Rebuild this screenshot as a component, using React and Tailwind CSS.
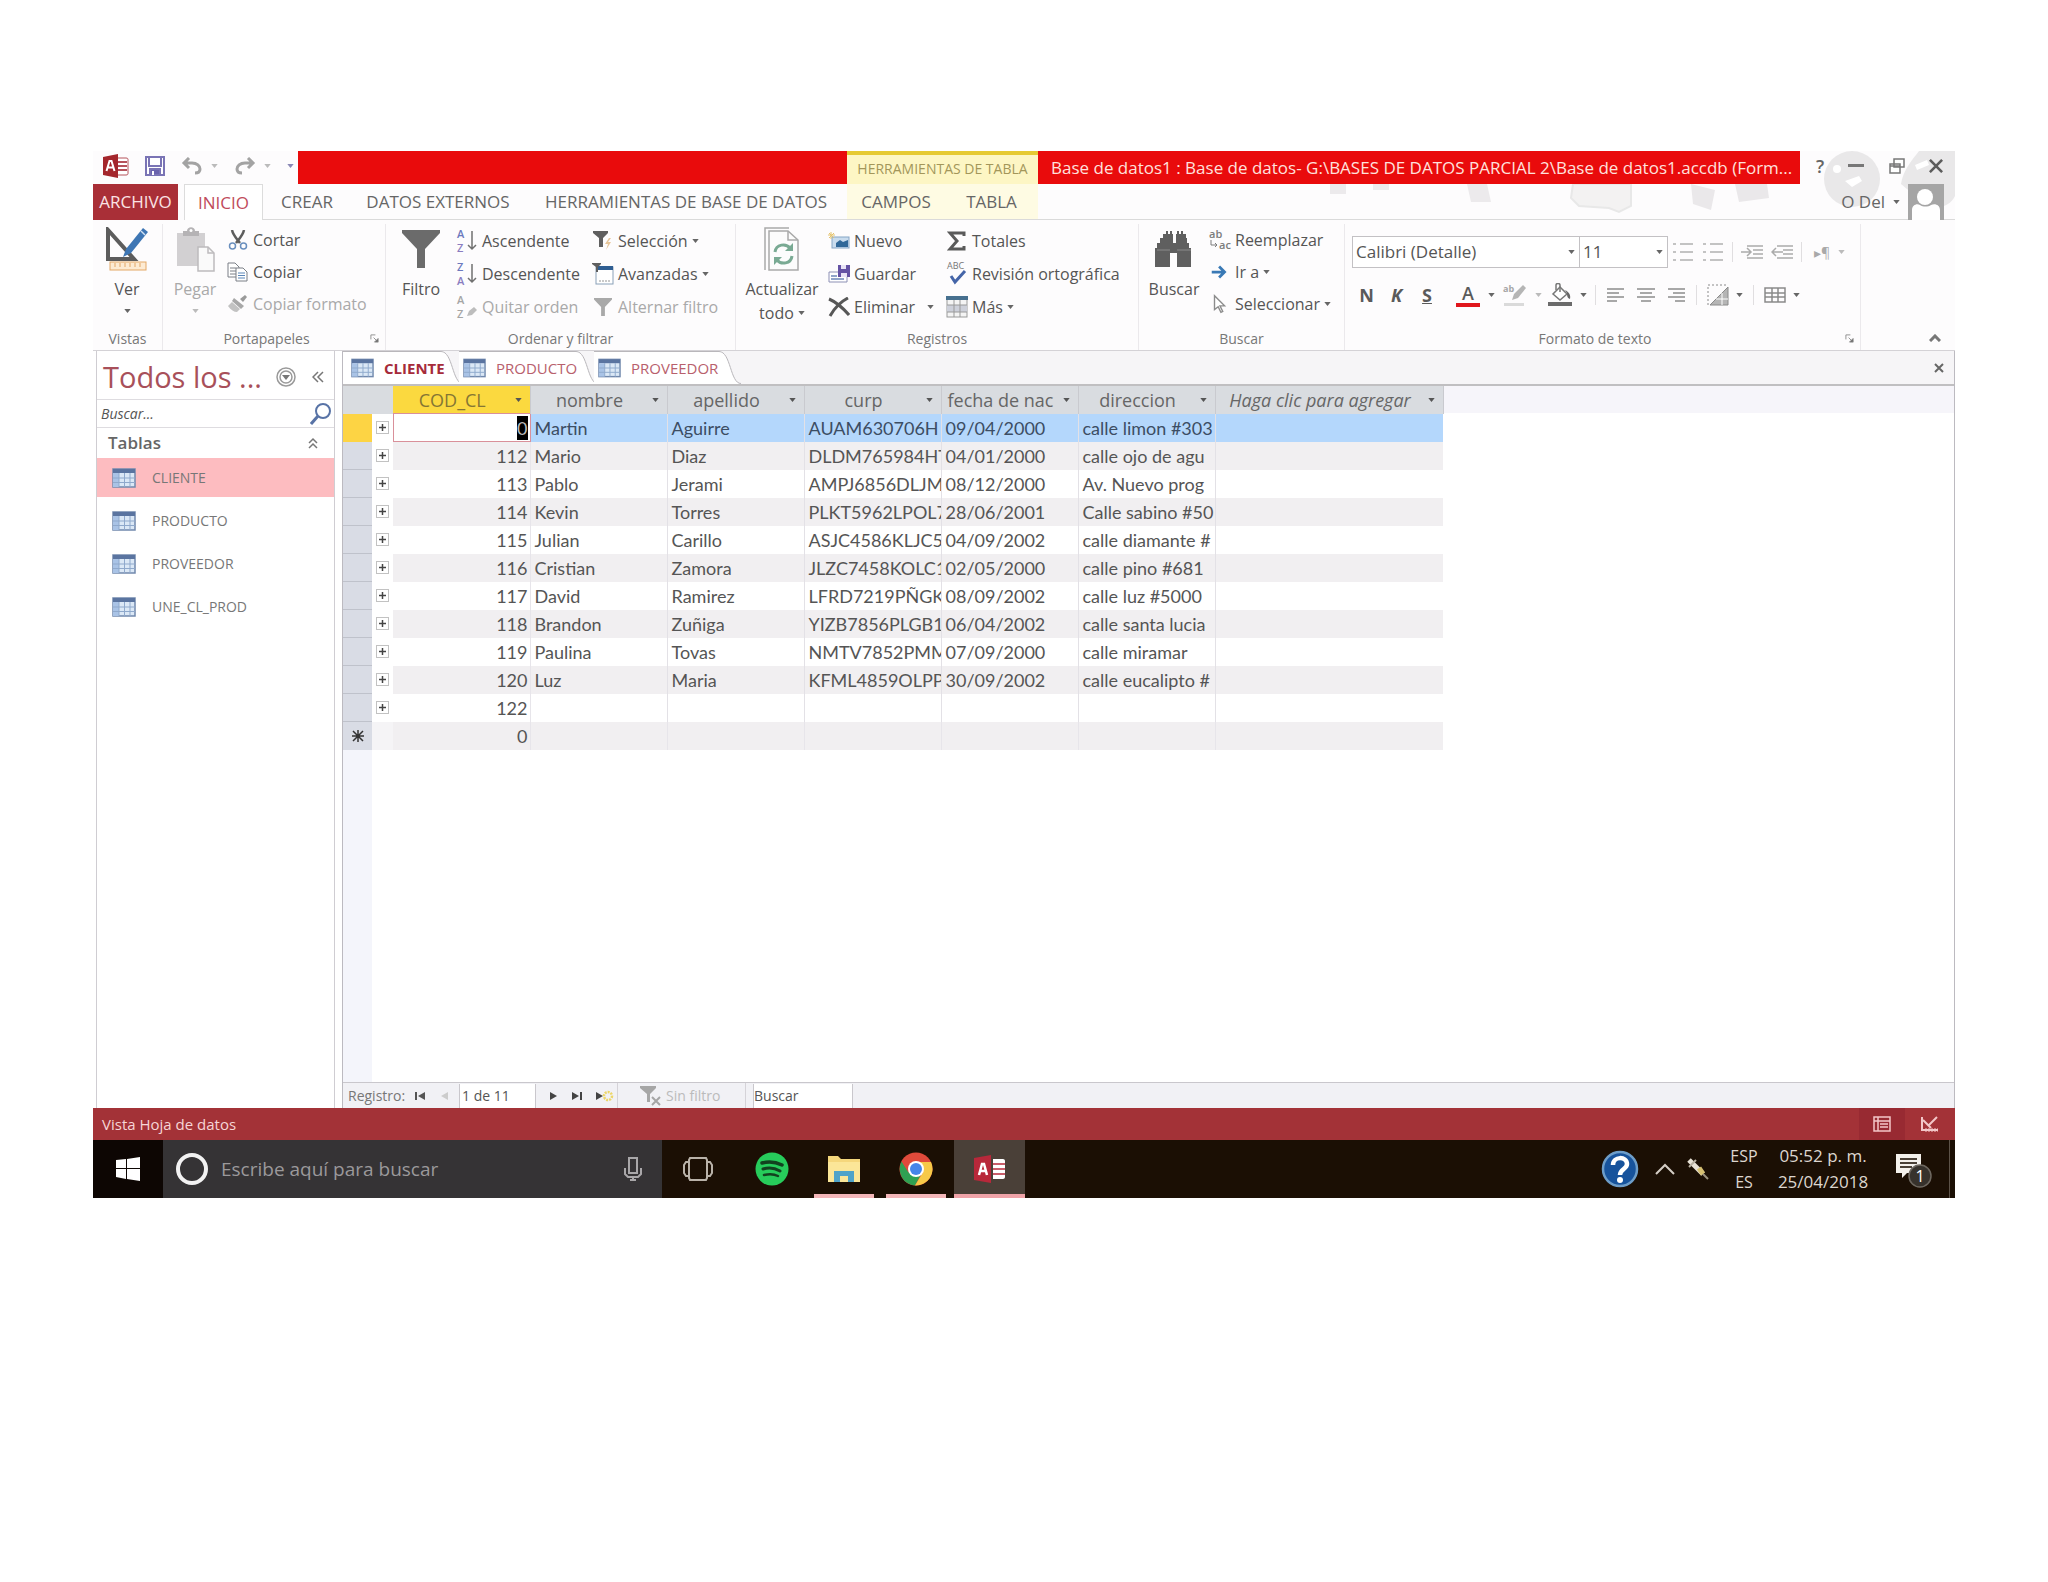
import { useState } from 'react';

const RIBBON_TABS = ['CREAR', 'DATOS EXTERNOS', 'HERRAMIENTAS DE BASE DE DATOS'];

const TABLES = ['CLIENTE', 'PRODUCTO', 'PROVEEDOR', 'UNE_CL_PROD'];

const COLUMNS = ['nombre', 'apellido', 'curp', 'fecha de nac', 'direccion'];

const ROWS = [
  { cod: '0', cells: ['Martin', 'Aguirre', 'AUAM630706H', '09/04/2000', 'calle limon #303'] },
  { cod: '112', cells: ['Mario', 'Diaz', 'DLDM765984HT', '04/01/2000', 'calle ojo de agu'] },
  { cod: '113', cells: ['Pablo', 'Jerami', 'AMPJ6856DLJM', '08/12/2000', 'Av. Nuevo prog'] },
  { cod: '114', cells: ['Kevin', 'Torres', 'PLKT5962LPOL7', '28/06/2001', 'Calle sabino #50'] },
  { cod: '115', cells: ['Julian', 'Carillo', 'ASJC4586KLJC5', '04/09/2002', 'calle diamante #'] },
  { cod: '116', cells: ['Cristian', 'Zamora', 'JLZC7458KOLC1', '02/05/2000', 'calle pino #681'] },
  { cod: '117', cells: ['David', 'Ramirez', 'LFRD7219PÑGK', '08/09/2002', 'calle luz #5000'] },
  { cod: '118', cells: ['Brandon', 'Zuñiga', 'YIZB7856PLGB1', '06/04/2002', 'calle santa lucia'] },
  { cod: '119', cells: ['Paulina', 'Tovas', 'NMTV7852PMM', '07/09/2000', 'calle miramar'] },
  { cod: '120', cells: ['Luz', 'Maria', 'KFML4859OLPP', '30/09/2002', 'calle eucalipto #'] },
  { cod: '122', cells: ['', '', '', '', ''] },
];

/* ---------- icons ---------- */

const Caret = ({ className = 'text-[#666]' }) => (
  <svg viewBox="0 0 8 5" className={`w-[7px] h-[4px] shrink-0 ${className}`} fill="currentColor">
    <path d="M0 0h8L4 5z" />
  </svg>
);

const AccessIcon = ({ className }) => (
  <svg viewBox="0 0 26 24" className={className}>
    <path d="M14 4h9c2 0 2 1 2 2v13c0 1 0 2-2 2h-9z" fill="#fff" stroke="#b5525b" />
    <path d="M15 8h9M15 12h9M15 16h9" stroke="#b5525b" strokeWidth="2" />
    <path d="M0 3 15 0v24L0 21z" fill="#a4262c" />
    <path d="m3.500 17 3-10h2l3 10M5 13.500h5" stroke="#fff" strokeWidth="2" fill="none" />
  </svg>
);

const AccessTaskIcon = () => (
  <svg viewBox="0 0 32 28" className="w-8 h-7">
    <path d="M0 3 17 0v28L0 25z" fill="#b8283a" />
    <path d="m5 20 3-11h2l3 11M6 16h6" stroke="#fff" strokeWidth="2.500" fill="none" />
    <path d="M19 4h9c3 0 3 1 3 3v14c0 2 0 3-3 3h-9z" fill="#fff" />
    <path d="M19 9h12M19 14h12M19 19h12" stroke="#b8283a" strokeWidth="1.500" />
  </svg>
);

const TableIcon = ({ className = 'w-6 h-5' }) => (
  <svg viewBox="0 0 24 20" className={className}>
    <rect x="1" y="1" width="22" height="18" fill="#dbe8f6" stroke="#7189ad" strokeWidth="1.500" />
    <rect x="1" y="1" width="22" height="4" fill="#5a74a0" />
    <path d="M1 5h6v14H1z" fill="#a9c3e6" />
    <path d="M7 5v14M12.500 5v14M18 5v14M1 10h22M1 14.500h22" stroke="#8fa9cc" />
  </svg>
);

const SaveIcon = () => (
  <svg viewBox="0 0 20 20" className="w-5 h-5" fill="none" stroke="#7a74b5" strokeWidth="2">
    <path d="M1 1h18v18H1z" fill="#fff" />
    <path d="M4 1v9h12V1" />
    <path d="M5 19v-6h10v6z" fill="#6a63ad" />
    <path d="M8 15v4" stroke="#fff" />
  </svg>
);

const UndoIcon = ({ className = '' }) => (
  <svg viewBox="0 0 22 18" className={`w-[22px] h-[18px] ${className}`} fill="none" stroke="#a3a3a3" strokeWidth="3">
    <path d="M8 1 3 6l5 5M3 6h8c5 0 8 3 8 6s-2 4-5 4" />
  </svg>
);

const ViewIcon = () => (
  <svg viewBox="0 0 42 44" className="w-[42px] h-[44px]">
    <path d="M2 3v29h26z" fill="none" stroke="#5c5c5c" strokeWidth="4" />
    <path d="m17 30 3-8L37 1l5 4-17 21z" fill="#3e76b4" />
    <path d="m35 4 4 4" stroke="#cfe0f2" strokeWidth="1.500" />
    <rect x="4" y="35" width="36" height="8" fill="#fdebd3" stroke="#e3a766" />
    <path d="M9 36v4M14 36v4M19 36v4M24 36v4M29 36v4M34 36v4" stroke="#e3a766" />
  </svg>
);

const PasteIcon = () => (
  <svg viewBox="0 0 40 46" className="w-10 h-[46px]">
    <path d="M2 7h28v33H2z" fill="#d2d0d2" />
    <path d="M8 10V5h4c0-5 8-5 8 0h4v5z" fill="#b5b3b5" />
    <circle cx="16" cy="4.500" r="1.500" fill="#fff" />
    <path d="M23 21h10l6 6v18H23z" fill="#fafafa" stroke="#bdbbbd" strokeWidth="1.500" />
    <path d="M33 21v6h6" fill="none" stroke="#bdbbbd" strokeWidth="1.500" />
  </svg>
);

const ScissorsIcon = () => (
  <svg viewBox="0 0 20 20" className="w-5 h-5" fill="none">
    <path d="M4 0c1 5 4 8 8 13M16 0c-1 5-4 8-8 13" stroke="#5d5d5d" strokeWidth="2.500" />
    <circle cx="4.500" cy="16" r="3" stroke="#6a8fbe" strokeWidth="1.500" />
    <circle cx="15.500" cy="16" r="3" stroke="#6a8fbe" strokeWidth="1.500" />
  </svg>
);

const CopyIcon = () => (
  <svg viewBox="0 0 22 20" className="w-[22px] h-5" stroke="#7a7f86" fill="#fff">
    <path d="M1 1h7l4 4v10H1z" />
    <path d="M3 6h6M3 9h6M3 12h6" />
    <path d="M9 6h7l4 4v9H9z" />
    <path d="M11 11h7M11 13.500h7M11 16h7" stroke="#5b86b8" />
  </svg>
);

const BrushIcon = () => (
  <svg viewBox="0 0 20 18" className="w-5 h-[18px]">
    <path d="m12 4 5-4 2 2-4 5z" fill="#9a9a9a" />
    <path d="m6 3 10 8-3 3L4 6z" fill="#a8a8a8" />
    <path d="m4 7 8 7-3 3c-3 0-6-2-9-6z" fill="#c2c2c2" />
  </svg>
);

const FunnelIcon = ({ className, fill = '#6b6b6b' }) => (
  <svg viewBox="0 0 38 38" className={className}>
    <path d="M0 0h38v3L23 19v19h-8V19L0 3z" fill={fill} />
  </svg>
);

const SortIcon = ({ top, bottom, muted }) => (
  <svg viewBox="0 0 22 24" className="w-[22px] h-6 overflow-visible" fontFamily="Open Sans, sans-serif" fontSize="11" fontWeight="600">
    <text x="1" y="9" fill={muted ? '#a5a5a5' : '#6b78bd'}>{top}</text>
    <text x="1" y="23" fill={muted ? '#a5a5a5' : '#8a7cc0'}>{bottom}</text>
    {muted ? (
      <path d="m11 21 2-5 5-4 3 3-5 5z" fill="#bdbdbd" />
    ) : (
      <path d="M16 2v18m-4-4 4 4 4-4" fill="none" stroke="#707070" strokeWidth="1.500" />
    )}
  </svg>
);

const SelectionIcon = () => (
  <svg viewBox="0 0 22 20" className="w-[22px] h-5">
    <path d="M1 0h15v2l-5 5v9H7V7L1 2z" fill="#5f5f5f" />
    <path d="m17 7-4 6h3l-2 6 5-8h-3l3-4z" fill="#e6c59a" />
  </svg>
);

const AdvancedIcon = () => (
  <svg viewBox="0 0 22 22" className="w-[22px] h-[22px]">
    <rect x="4" y="4" width="17" height="17" fill="#fff" stroke="#8aa0b8" />
    <path d="M4 3h17v4H4z" fill="#2f5e92" />
    <path d="M7 18h12" stroke="#c9c9c9" strokeWidth="2" strokeDasharray="2 1" />
    <path d="M0 0h9v1L6 4v5H4V4L0 1z" fill="#5f5f5f" />
  </svg>
);

const RefreshIcon = () => (
  <svg viewBox="0 0 36 44" className="w-9 h-11" fill="none">
    <path d="M1 43V1h24" stroke="#a9a9a9" strokeWidth="1.500" />
    <path d="M5 4h19l10 9v30H5z" fill="#fcfcfc" stroke="#a9a9a9" strokeWidth="1.500" />
    <path d="M24 4v9h10" stroke="#a9a9a9" strokeWidth="1.500" />
    <path d="M11 25c1-8 11-9 15-4M28 29c-1 8-11 9-15 4" stroke="#79aa93" strokeWidth="3" />
    <path d="M29 16v8h-8zM10 38v-8h8z" fill="#79aa93" />
  </svg>
);

const NewRecordIcon = () => (
  <svg viewBox="0 0 22 18" className="w-[22px] h-[18px]">
    <rect x="4" y="5" width="17" height="11" fill="#c9dcee" stroke="#86a5c6" />
    <path d="M8 15v-4l4-3 3 2 5-2v7z" fill="#316899" />
    <path d="M3 0v7M0 3h7M1 1l5 5M6 1 1 6" stroke="#e5c46e" />
  </svg>
);

const SaveRecordIcon = () => (
  <svg viewBox="0 0 22 18" className="w-[22px] h-[18px]">
    <path d="M1 7h18v10H1z" fill="#fff" stroke="#8d90b5" />
    <path d="M3 11h6M3 14h13" stroke="#6c86b8" strokeWidth="1.500" />
    <path d="M10 0h12v12H10z" fill="#6452a4" />
    <path d="M13 0h5v4h-5zM13 8h6v4h-6z" fill="#e8e3f5" />
  </svg>
);

const DeleteIcon = () => (
  <svg viewBox="0 0 22 20" className="w-[22px] h-5" fill="none" stroke="#575757" strokeWidth="3">
    <path d="M1 2c7 3 14 9 20 16M20 1C12 5 6 12 2 19" />
  </svg>
);

const SigmaIcon = () => (
  <svg viewBox="0 0 20 20" className="w-5 h-5" fill="none" stroke="#5a5a5a" strokeWidth="3">
    <path d="M17 5V2H3l7 8-7 8h14v-3" />
  </svg>
);

const SpellIcon = () => (
  <svg viewBox="0 0 20 24" className="w-5 h-6 overflow-visible">
    <text x="0" y="7" fontFamily="Open Sans, sans-serif" fontSize="9" fill="#777">ABC</text>
    <path d="m4 14 4 6L18 9" fill="none" stroke="#4565a8" strokeWidth="3" />
  </svg>
);

const MoreIcon = () => (
  <svg viewBox="0 0 22 22" className="w-[22px] h-[22px]">
    <rect x="1" y="1" width="20" height="20" fill="#f4f4f4" stroke="#9a9a9a" />
    <path d="M0 0h22v4H0z" fill="#47708f" />
    <path d="M1 9h20v7H1z" fill="#cdd0da" />
    <path d="M1 9h20M1 16h20M8 4v17M14 4v17" stroke="#9a9a9a" />
  </svg>
);

const BinocularsIcon = () => (
  <svg viewBox="0 0 40 36" className="w-10 h-9" fill="#5f5f5f">
    <path d="M9 3h3V0h2v3h2V0h2v3h1v9h3V3h1V0h2v3h2V0h2v3h3v4h1v5h2v5h2v19H23V22h-7v14H1V17h2v-5h3V7h3z" />
    <path d="M3 19h13M23 19h14" stroke="#8b8b8b" />
  </svg>
);

const ReplaceIcon = () => (
  <svg viewBox="0 0 24 22" className="w-6 h-[22px] overflow-visible" fontFamily="Open Sans, sans-serif" fontSize="11" fontWeight="600" fill="#7c7c7c">
    <text x="1" y="9">ab</text>
    <text x="11" y="20">ac</text>
    <path d="M3 11v5h6m-2-2 2 2-2 2" fill="none" stroke="#7c7c7c" />
  </svg>
);

const GoToIcon = () => (
  <svg viewBox="0 0 24 16" className="w-6 h-4" fill="none" stroke="#3979b5" strokeWidth="3">
    <path d="M3 8h14M11 2l6 6-6 6" />
  </svg>
);

const CursorIcon = () => (
  <svg viewBox="0 0 24 20" className="w-6 h-5">
    <path d="M6 1v15l4-3 3 6 2-1-3-6h5z" fill="#fff" stroke="#8c8c8c" strokeWidth="1.500" />
  </svg>
);

const ListIcon = () => (
  <svg viewBox="0 0 22 20" className="w-[22px] h-5" stroke="#c3c3c3" strokeWidth="2">
    <path d="M1 2h3M8 2h13M1 10h3M8 10h13M1 18h3M8 18h13" />
  </svg>
);

const IndentIcon = ({ out }) => (
  <svg viewBox="0 0 22 14" className="w-[22px] h-[14px]" fill="none" stroke="#ababab" strokeWidth="1.500">
    <path d="M6 1h16M12 5h10M12 9h10M6 13h16" />
    {out ? <path d="M12 7H1m4-4L1 7l4 4" /> : <path d="M0 7h10M6 3l4 4-4 4" />}
  </svg>
);

const AlignIcon = ({ d }) => (
  <svg viewBox="0 0 20 16" className="w-5 h-4" stroke="#8c8c8c" strokeWidth="1.500">
    <path d={d} />
  </svg>
);

const HighlightIcon = () => (
  <svg viewBox="0 0 24 22" className="w-6 h-[22px] overflow-visible">
    <text x="0" y="8" fontFamily="Open Sans, sans-serif" fontSize="9" fill="#a6a6a6">ab</text>
    <path d="m9 16 2-6L20 1l3 3-8 10z" fill="#b5b5b5" />
    <path d="M1 19h20v3H1z" fill="#dadada" />
  </svg>
);

const BucketIcon = () => (
  <svg viewBox="0 0 24 24" className="w-6 h-6">
    <path d="m12 4 7 7-7 6-7-6z" fill="#fff" stroke="#777" strokeWidth="1.500" />
    <path d="M12 9V2c0-2-4-2-4 0v5" fill="none" stroke="#777" strokeWidth="1.500" />
    <path d="M17 7c4 2 6 5 5 9-3-1-3-4-3-6z" fill="#666" />
    <path d="M0 19h24v4H0z" fill="#6b6b6b" />
  </svg>
);

const AltRowsIcon = () => (
  <svg viewBox="0 0 22 22" className="w-[22px] h-[22px]" fill="none" stroke="#8a8a8a">
    <path d="M1 21V1h20" strokeDasharray="2 2" />
    <path d="M21 3v18H3z" fill="#b5b5b5" />
    <path d="M15 9v12M9 15h12" stroke="#fff" />
  </svg>
);

const GridlinesIcon = () => (
  <svg viewBox="0 0 22 16" className="w-[22px] h-4" fill="none" stroke="#8a8a8a" strokeWidth="1.500">
    <path d="M1 1h20v14H1zM1 6h20M1 10h20M8 1v14M14 1v14" />
  </svg>
);

const LauncherIcon = () => (
  <svg viewBox="0 0 10 10" className="w-[9px] h-[9px]" fill="none" stroke="#8a8a8a">
    <path d="M1 6V1h5M4 4l5 5" />
    <path d="M9 5v4H5z" fill="#666" />
  </svg>
);

/* faint drawing behind the tab row */
const Backdrop = () => (
  <svg viewBox="0 0 640 69" className="absolute right-0 top-0 w-[640px] h-[69px]" fill="#e9e8e9">
    <circle cx="537" cy="28" r="28" />
    <path d="M586 33c2-14 12-25 18-33h36v45c-6 12-20 14-30 8z" />
    <g fill="#fff">
      <circle cx="522" cy="18" r="4" />
      <path d="m530 30 14-5 3 5-10 6z" />
      <path d="m600 14 12-5 2 5-12 5z" />
    </g>
    <path d="M15 33h16v10H15zM58 33h16v6H58zM152 33h20l4 18h-20z" fill="#eceaec" />
    <path d="M258 33h58v22l-12 6-10-4-30-2-8-8z" fill="#f3f2f2" stroke="#e8e8e8" strokeWidth="2" />
    <path d="m376 33 24 6-4 20-18-6zM420 33h32l2 14-30 4z" fill="#eae8ea" />
  </svg>
);

/* ---------- ribbon parts ---------- */

function SmallButton({ icon, label, caret, muted }) {
  return (
    <button
      className={`flex items-center h-8 gap-1 whitespace-nowrap text-[16px] ${
        muted ? 'text-[#a9a9a9]' : 'text-[#555]'
      }`}
    >
      <span className="w-[22px] flex justify-center">{icon}</span>
      {label}
      {caret && <Caret />}
    </button>
  );
}

function BigButton({ icon, label, width, caret, muted }) {
  return (
    <button
      className={`flex flex-col items-center shrink-0 text-[16px] leading-6 ${width} ${
        muted ? 'text-[#a9a9a9]' : 'text-[#555]'
      }`}
    >
      <span className="h-[50px] flex items-center justify-center">{icon}</span>
      <span className="mt-[3px]">{label}</span>
      {caret && <Caret className={muted ? 'text-[#bbb] mt-2' : 'text-[#666] mt-2'} />}
    </button>
  );
}

function Group({ label, width, launcher, children }) {
  return (
    <section className={`flex flex-col shrink-0 border-r border-[#ebe9ec] ${width}`}>
      <div className="flex h-[102px] pl-1">{children}</div>
      <footer className="flex items-center h-6 text-[14px] text-[#777]">
        <span className="flex-1 text-center">{label}</span>
        {launcher && (
          <button aria-label={`Opciones de ${label}`} className="mr-[6px]">
            <LauncherIcon />
          </button>
        )}
      </footer>
    </section>
  );
}

const Separator = () => <span className="w-px h-5 bg-[#e0dee0]" />;

function TitleBar() {
  return (
    <header className="relative flex h-[33px]">
      <div className="flex items-center w-[205px] shrink-0 pl-[10px] pb-1">
        <AccessIcon className="w-[26px] h-6" />
        <button aria-label="Guardar" className="ml-4"><SaveIcon /></button>
        <button aria-label="Deshacer" className="flex items-center gap-2 ml-4">
          <UndoIcon /><Caret className="text-[#bbb]" />
        </button>
        <button aria-label="Rehacer" className="flex items-center gap-2 ml-4">
          <UndoIcon className="-scale-x-100" /><Caret className="text-[#bbb]" />
        </button>
        <button aria-label="Personalizar barra" className="ml-4"><Caret className="text-[#8a88b5]" /></button>
      </div>
      <div className="w-[549px] bg-[#e90b0c]" />
      <div className="w-[191px] shrink-0 bg-[#fdf6c4] border-t-4 border-[#e6ca32] flex items-center justify-center pb-[2px] text-[14px] text-[#a3965a] whitespace-nowrap">
        HERRAMIENTAS DE TABLA
      </div>
      <h1 className="flex-1 min-w-0 bg-[#e90b0c] text-[#ffe1dd] text-[17px] leading-[33px] pl-[13px] truncate">
        Base de datos1 : Base de datos- G:\BASES DE DATOS PARCIAL 2\Base de datos1.accdb (Form...
      </h1>
      <div className="flex items-center justify-between w-[155px] shrink-0 pl-4 pr-3 pb-1 text-[#666]">
        <button aria-label="Ayuda" className="text-[18px] font-semibold leading-5">?</button>
        <button aria-label="Minimizar" className="w-4 h-[3px] bg-[#777]" />
        <button aria-label="Restaurar">
          <svg viewBox="0 0 16 16" className="w-4 h-4" fill="#fff" stroke="#777" strokeWidth="1.500">
            <path d="M5 1h10v8H5zM1 6h10v9H1z" /><path d="M1 8h10" />
          </svg>
        </button>
        <button aria-label="Cerrar">
          <svg viewBox="0 0 16 16" className="w-[14px] h-[14px]" stroke="#5c5c5c" strokeWidth="3">
            <path d="m1 1 14 14M15 1 1 15" />
          </svg>
        </button>
      </div>
    </header>
  );
}

function RibbonTabs() {
  return (
    <nav className="relative flex h-9 text-[17px] text-[#666] whitespace-nowrap">
      <button className="w-[85px] bg-[#a92f37] text-[#fbe3e4]">ARCHIVO</button>
      <button className="w-[79px] ml-[6px] text-[#c04a5b] bg-white border border-b-0 border-[#dcdcdc]">INICIO</button>
      <div className="flex-1 flex border-b border-[#dadada]">
        {RIBBON_TABS.map((tab, i) => (
          <button key={tab} className={['w-[88px]', 'w-[174px]', 'w-[322px]'][i]}>{tab}</button>
        ))}
        <div className="flex w-[191px] bg-[#fefbe3]">
          <button className="w-[98px]">CAMPOS</button>
          <button className="flex-1">TABLA</button>
        </div>
        <div className="ml-auto flex items-center">
          <button className="flex items-center gap-2 mr-2 text-[17px]">O Del <Caret /></button>
          <svg viewBox="0 0 36 36" className="w-9 h-9 mr-[11px]">
            <path d="M0 0h36v36H0z" fill="#a5a5a5" />
            <circle cx="17" cy="13" r="8" fill="#fff" />
            <path d="M4 36V26c0-5 5-7 8-5 3 2 8 2 11 0 4-2 9 0 9 5v10z" fill="#fff" />
          </svg>
        </div>
      </div>
    </nav>
  );
}

function FormatGroup() {
  return (
    <div className="flex flex-col pl-[3px] pt-3">
      <div className="flex items-center h-8">
        <label className="flex items-center w-[228px] h-8 pr-1 border border-[#c3c1c4] bg-white">
          <select aria-label="Fuente" className="flex-1 appearance-none text-[17px] text-[#555] pl-[3px]">
            <option>Calibri (Detalle)</option>
          </select>
          <Caret />
        </label>
        <label className="flex items-center w-[89px] h-8 pr-1 -ml-px border border-[#c3c1c4] bg-white">
          <select aria-label="Tamaño" className="flex-1 appearance-none text-[17px] text-[#555] pl-[3px]">
            <option>11</option>
          </select>
          <Caret />
        </label>
        <div className="flex items-center gap-2 ml-1">
          <button aria-label="Viñetas"><ListIcon /></button>
          <button aria-label="Numeración"><ListIcon /></button>
          <Separator />
          <button aria-label="Aumentar sangría"><IndentIcon /></button>
          <button aria-label="Disminuir sangría"><IndentIcon out /></button>
          <Separator />
          <button className="flex items-center gap-2 pl-1 text-[14px] text-[#a9a9a9]">▸¶ <Caret className="text-[#bbb]" /></button>
        </div>
      </div>
      <div className="flex items-center h-8 mt-[11px] text-[18px] font-bold text-[#5a5a5a]">
        <button className="w-[29px]">N</button>
        <button className="w-[31px] italic">K</button>
        <button className="w-[30px] underline">S</button>
        <button aria-label="Color de fuente" className="flex items-center gap-2 ml-[14px]">
          <span className="w-6 h-6 border-b-4 border-[#e0161c] leading-5 font-semibold">A</span><Caret />
        </button>
        <button aria-label="Resaltado" className="flex items-center gap-2 ml-2"><HighlightIcon /><Caret className="text-[#bbb]" /></button>
        <button aria-label="Color de fondo" className="flex items-center gap-2 ml-[6px]"><BucketIcon /><Caret /></button>
        <div className="flex items-center gap-[10px] ml-2">
          <Separator />
          <button aria-label="Alinear a la izquierda"><AlignIcon d="M1 2h17M1 6h12M1 10h17M1 14h10" /></button>
          <button aria-label="Centrar"><AlignIcon d="M1 2h18M4 6h12M1 10h18M5 14h10" /></button>
          <button aria-label="Alinear a la derecha"><AlignIcon d="M2 2h17M7 6h12M2 10h17M9 14h10" /></button>
          <Separator />
          <button aria-label="Color de fila alternativo" className="flex items-center gap-[7px]"><AltRowsIcon /><Caret /></button>
          <Separator />
          <button aria-label="Líneas de cuadrícula" className="flex items-center gap-[7px]"><GridlinesIcon /><Caret /></button>
        </div>
      </div>
    </div>
  );
}

function Ribbon() {
  return (
    <div className="flex h-[131px] pt-1 border-b border-[#d4d2d6]">
      <Group label="Vistas" width="w-[70px]">
        <BigButton icon={<ViewIcon />} label="Ver" width="w-[60px]" caret />
      </Group>
      <Group label="Portapapeles" width="w-[223px]" launcher>
        <BigButton icon={<PasteIcon />} label="Pegar" width="w-[56px]" caret muted />
        <div className="ml-1">
          <SmallButton icon={<ScissorsIcon />} label="Cortar" />
          <SmallButton icon={<CopyIcon />} label="Copiar" />
          <SmallButton icon={<BrushIcon />} label="Copiar formato" muted />
        </div>
      </Group>
      <Group label="Ordenar y filtrar" width="w-[350px]">
        <BigButton icon={<FunnelIcon className="w-[38px] h-[38px]" />} label="Filtro" width="w-[62px]" />
        <div className="flex flex-col gap-px pt-px w-[136px] ml-1">
          <SmallButton icon={<SortIcon top="A" bottom="Z" />} label="Ascendente" />
          <SmallButton icon={<SortIcon top="Z" bottom="A" />} label="Descendente" />
          <SmallButton icon={<SortIcon top="A" bottom="Z" muted />} label="Quitar orden" muted />
        </div>
        <div className="flex flex-col gap-px pt-px">
          <SmallButton icon={<SelectionIcon />} label="Selección" caret />
          <SmallButton icon={<AdvancedIcon />} label="Avanzadas" caret />
          <SmallButton icon={<FunnelIcon className="w-5 h-[18px]" fill="#a9a9a9" />} label="Alternar filtro" muted />
        </div>
      </Group>
      <Group label="Registros" width="w-[403px]">
        <BigButton
          icon={<RefreshIcon />}
          label={<>Actualizar<br /><span className="inline-flex items-center gap-1">todo <Caret /></span></>}
          width="w-[84px]"
        />
        <div className="flex flex-col gap-px pt-px w-[118px] ml-1">
          <SmallButton icon={<NewRecordIcon />} label="Nuevo" />
          <SmallButton icon={<SaveRecordIcon />} label="Guardar" />
          <SmallButton icon={<DeleteIcon />} label={<span className="mr-2">Eliminar</span>} caret />
        </div>
        <div className="flex flex-col gap-px pt-px">
          <SmallButton icon={<SigmaIcon />} label="Totales" />
          <SmallButton icon={<SpellIcon />} label="Revisión ortográfica" />
          <SmallButton icon={<MoreIcon />} label="Más" caret />
        </div>
      </Group>
      <Group label="Buscar" width="w-[206px]">
        <BigButton icon={<BinocularsIcon />} label="Buscar" width="w-[62px]" />
        <div className="ml-1">
          <SmallButton icon={<ReplaceIcon />} label="Reemplazar" />
          <SmallButton icon={<GoToIcon />} label="Ir a" caret />
          <SmallButton icon={<CursorIcon />} label="Seleccionar" caret />
        </div>
      </Group>
      <Group label="Formato de texto" width="w-[516px]" launcher>
        <FormatGroup />
      </Group>
      <button aria-label="Contraer la cinta" className="ml-auto mt-auto mr-[14px] mb-2">
        <svg viewBox="0 0 12 8" className="w-3 h-2" fill="none" stroke="#777" strokeWidth="3">
          <path d="m1 7 5-5 5 5" />
        </svg>
      </button>
    </div>
  );
}

/* ---------- navigation pane ---------- */

function NavPane({ current, onSelect }) {
  return (
    <aside className="w-[239px] shrink-0 ml-[3px] border-x border-[#cfcdd2]">
      <div className="flex items-center h-12 px-[6px] pt-1">
        <h2 className="text-[29px] leading-10 text-[#a8505a] whitespace-nowrap">Todos los ...</h2>
        <button aria-label="Opciones" className="ml-auto">
          <svg viewBox="0 0 20 20" className="w-5 h-5" fill="none" stroke="#9a9a9a" strokeWidth="1.500">
            <circle cx="10" cy="10" r="9" /><circle cx="10" cy="10" r="6" /><path d="M6 8h8l-4 5z" fill="#777" stroke="none" />
          </svg>
        </button>
        <button aria-label="Contraer panel" className="ml-4 mr-1">
          <svg viewBox="0 0 12 12" className="w-3 h-3" fill="none" stroke="#777" strokeWidth="1.500">
            <path d="M6 1 1 6l5 5M11 1 6 6l5 5" />
          </svg>
        </button>
      </div>
      <div className="flex items-center h-[29px] border-y border-[#dedce0]">
        <input
          aria-label="Buscar tablas"
          placeholder="Buscar..."
          className="flex-1 min-w-0 pl-1 text-[14px] italic placeholder:text-[#555]"
        />
        <button aria-label="Buscar" className="px-[2px]">
          <svg viewBox="0 0 22 22" className="w-[22px] h-[22px]" fill="none" stroke="#5873a6" strokeWidth="2">
            <circle cx="13" cy="8" r="7" /><path d="m8 13-7 8" strokeWidth="3" />
          </svg>
        </button>
      </div>
      <button className="flex items-center justify-between w-full h-[30px] pl-[11px] pr-4 text-[17px] font-semibold text-[#666]">
        Tablas
        <svg viewBox="0 0 10 12" className="w-[10px] h-3" fill="none" stroke="#777" strokeWidth="1.500">
          <path d="m1 6 4-4 4 4M1 11l4-4 4 4" />
        </svg>
      </button>
      <ul className="flex flex-col gap-1">
        {TABLES.map((name) => (
          <li key={name}>
            <button
              onClick={() => onSelect(name)}
              className={`flex items-center gap-4 w-full h-[39px] pl-[15px] text-[14px] text-[#777] ${
                name === current ? 'bg-[#fdbcc0]' : ''
              }`}
            >
              <TableIcon />
              {name}
            </button>
          </li>
        ))}
      </ul>
    </aside>
  );
}

/* ---------- datasheet ---------- */

function DocTab({ name, active, width, onClick }) {
  return (
    <button
      onClick={onClick}
      className={`flex items-center h-[33px] -mr-1 text-[15px] ${
        active ? 'font-bold text-[#a62b3a]' : 'text-[#b8606c]'
      }`}
    >
      <span className={`relative z-10 flex items-center h-full bg-white border-t border-[#b9b7bb] whitespace-nowrap ${width}`}>
        <TableIcon className="w-[23px] h-5 shrink-0" />
        {name}
      </span>
      <svg viewBox="0 0 22 33" className="w-[22px] h-[33px]">
        <path d="M0 0c12 0 11 33 22 33H0z" fill="#fff" />
        <path d="M0 .5c12 0 11 32 22 32" fill="none" stroke="#b9b7bb" />
      </svg>
    </button>
  );
}

function HeaderCell({ children, className = '' }) {
  return (
    <th className={`p-0 font-normal border-r border-[#c9cacf] ${className}`}>
      <span className="flex items-center h-[27px] pl-px pr-2 leading-6">
        <span className="flex-1 pr-1 text-center whitespace-nowrap">{children}</span>
        <button aria-label="Filtrar columna"><Caret className="text-[#555]" /></button>
      </span>
    </th>
  );
}

function Datasheet() {
  return (
    <table className="w-[1100px] table-fixed border-collapse font-[Lato,sans-serif] text-[18px] leading-6 text-[#555]">
      <colgroup>
        <col className="w-[29px]" />
        <col className="w-[21px]" />
        <col className="w-[137px]" />
        {COLUMNS.map((c) => <col key={c} className="w-[137px]" />)}
        <col className="w-[228px]" />
      </colgroup>
      <thead className="font-['Open_Sans','Noto_Sans',sans-serif] text-[18px]">
        <tr className="bg-[#d9dce0] text-[#666]">
          <th colSpan={2} className="p-0" aria-label="Seleccionar todo" />
          <HeaderCell className="bg-[#fbd93f] text-[#857634]">COD_CL</HeaderCell>
          {COLUMNS.map((c) => <HeaderCell key={c}>{c}</HeaderCell>)}
          <HeaderCell className="italic">Haga clic para agregar</HeaderCell>
        </tr>
      </thead>
      <tbody>
        {ROWS.map(({ cod, cells }, i) => {
          const first = i === 0;
          return (
            <tr key={cod} className={first ? 'bg-[#b4d7fc] text-[#3c4d63]' : i % 2 ? 'bg-[#f1eff1]' : 'bg-white'}>
              <td className={`p-0 border-b ${first ? 'bg-[#fdd444] border-[#fdd444]' : 'bg-[#d9dce5] border-[#bfc2cb]'}`} />
              <td className="p-0 bg-white">
                <button aria-label={`Expandir ${cod}`} className="flex items-center justify-center w-[13px] h-[13px] mx-auto border border-[#c2c2c2] bg-white">
                  <svg viewBox="0 0 7 7" className="w-[7px] h-[7px]" stroke="#444" strokeWidth="1.500">
                    <path d="M0 3.500h7M3.500 0v7" />
                  </svg>
                </button>
              </td>
              <td className={`h-7 p-0 pr-[2px] text-right ${first ? 'bg-white border border-[#d9909a]' : 'border-r border-[#e7e5ea]'}`}>
                {first ? <span className="inline-block bg-black text-[#bbb]">{cod}</span> : cod}
              </td>
              {cells.map((text, j) => (
                <td key={j} className="h-7 p-0 pl-1 overflow-hidden whitespace-nowrap border-r border-[#e3e1e6]">{text}</td>
              ))}
              <td className="p-0" />
            </tr>
          );
        })}
        <tr className="bg-[#f1eff1]">
          <td className="p-0 bg-[#d9dce5]">
            <svg viewBox="0 0 12 12" className="w-3 h-3 mx-auto" stroke="#333" strokeWidth="1.500">
              <path d="M6 0v12M0 6h12M1 1l10 10M11 1 1 11" />
            </svg>
          </td>
          <td className="p-0 bg-[#f5f4f6]" />
          <td className="h-7 p-0 pr-[2px] text-right border-r border-[#e7e5ea]">0</td>
          {COLUMNS.map((c) => <td key={c} className="p-0 border-r border-[#e7e5ea]" />)}
          <td className="p-0" />
        </tr>
      </tbody>
    </table>
  );
}

function RecordNav() {
  return (
    <div className="flex items-center h-[26px] border-t border-[#c9c7cc] bg-[#f1f1f5] text-[14px] text-[#777]">
      <label htmlFor="record" className="pl-[5px] w-[72px]">Registro:</label>
      <button aria-label="Primer registro" className="w-[26px]">
        <svg viewBox="0 0 10 8" className="w-[10px] h-2" fill="#555"><path d="M0 0h2v8H0zM10 0v8L3 4z" /></svg>
      </button>
      <button aria-label="Registro anterior" className="w-[18px]">
        <svg viewBox="0 0 8 8" className="w-2 h-2" fill="#ccc"><path d="M7 0v8L0 4z" /></svg>
      </button>
      <input id="record" defaultValue="1 de 11" className="w-[77px] h-6 bg-white border-x border-[#c9c7cc] pl-[2px] text-[14px] text-[#555]" />
      <div className="flex items-center gap-[14px] w-[81px] pl-[14px]">
        <button aria-label="Registro siguiente">
          <svg viewBox="0 0 8 8" className="w-2 h-2" fill="#444"><path d="M0 0v8l7-4z" /></svg>
        </button>
        <button aria-label="Último registro">
          <svg viewBox="0 0 10 8" className="w-[10px] h-2" fill="#444"><path d="M8 0h2v8H8zM0 0v8l7-4z" /></svg>
        </button>
        <button aria-label="Nuevo registro">
          <svg viewBox="0 0 18 12" className="w-[18px] h-3">
            <path d="M0 2v8l7-4z" fill="#444" />
            <circle cx="12" cy="6" r="4" fill="none" stroke="#ecd667" strokeWidth="2.500" strokeDasharray="2 1" />
          </svg>
        </button>
      </div>
      <button disabled className="flex items-center gap-1 w-[129px] h-full pl-[22px] border-x border-[#d5d3d8] text-[#bbb]">
        <svg viewBox="0 0 22 20" className="w-[22px] h-5">
          <path d="M0 0h16v2l-6 6v8H7V8L0 2z" fill="#a6a6a6" />
          <path d="m12 11 8 8M20 11l-8 8" stroke="#a6a6a6" strokeWidth="2" />
        </svg>
        Sin filtro
      </button>
      <input aria-label="Buscar en registros" defaultValue="Buscar" className="w-[100px] h-6 ml-[7px] bg-white border-x border-[#c9c7cc] px-0 text-[14px] text-[#555]" />
    </div>
  );
}

function Document({ current, onSelect }) {
  return (
    <main className="flex flex-col flex-1 min-w-0 ml-[7px] border-l border-r border-[#bcbac0]">
      <div className="flex h-[35px] bg-[#f6f5f7] border-b-2 border-[#c0bfc1]">
        <DocTab name="CLIENTE" active={current === 'CLIENTE'} width="w-[98px] pl-2 gap-[10px]" onClick={() => onSelect('CLIENTE')} />
        <DocTab name="PRODUCTO" active={current === 'PRODUCTO'} width="w-[117px] pl-1 gap-[10px]" onClick={() => onSelect('PRODUCTO')} />
        <DocTab name="PROVEEDOR" active={current === 'PROVEEDOR'} width="w-[125px] pl-1 gap-[10px]" onClick={() => onSelect('PROVEEDOR')} />
        <button aria-label="Cerrar tabla" className="ml-auto mr-[10px]">
          <svg viewBox="0 0 10 10" className="w-[10px] h-[10px]" stroke="#666" strokeWidth="2">
            <path d="m1 1 8 8M9 1 1 9" />
          </svg>
        </button>
      </div>
      <div className="flex flex-1">
        <div className="flex flex-col">
          <Datasheet />
          <div className="flex-1 w-[29px] bg-[#f4f5fb]" />
        </div>
        <div className="flex-1 h-[27px] bg-[#f6f5fa]" />
      </div>
      <RecordNav />
    </main>
  );
}

/* ---------- bottom bars ---------- */

function StatusBar() {
  return (
    <footer className="flex items-center h-8 pl-[9px] bg-[#a33237] text-[15px] text-[#f6d5d6]">
      Vista Hoja de datos
      <button aria-label="Vista Hoja de datos" className="ml-auto flex items-center justify-center w-[46px] h-full bg-[#982a32]">
        <svg viewBox="0 0 18 16" className="w-[18px] h-4" fill="none" stroke="#f3c6c8" strokeWidth="1.500">
          <path d="M1 1h16v14H1zM5 1v14M1 5h16M7 8h8M7 11h8" />
        </svg>
      </button>
      <button aria-label="Vista Diseño" className="flex items-center justify-center w-[50px] h-full">
        <svg viewBox="0 0 18 16" className="w-[18px] h-4" fill="none" stroke="#f3c6c8" strokeWidth="2">
          <path d="M1 1v13h16M2 4l8 8M8 9l8-8" /><path d="M4 14h13" strokeWidth="3" strokeDasharray="2 1" />
        </svg>
      </button>
    </footer>
  );
}

function TaskApp({ label, width, open, active, children }) {
  return (
    <button
      aria-label={label}
      className={`flex items-center justify-center h-full border-b-4 pt-1 ${width} ${
        active ? 'bg-[#4a4038] border-[#efa3a8]' : open ? 'border-[#f3b6b8]' : 'border-transparent'
      }`}
    >
      {children}
    </button>
  );
}

function Taskbar() {
  return (
    <div className="flex items-center h-[58px] bg-[#1b0f04] text-[#ddd6cf]">
      <button aria-label="Inicio" className="flex items-center justify-center w-[70px] h-full bg-[#0d0603]">
        <svg viewBox="0 0 24 24" className="w-6 h-6" fill="#fff">
          <path d="m0 3 10-1v9H0zM11 2l13-2v11H11zM0 12h10v10L0 20zM11 12h13v12l-13-2z" />
        </svg>
      </button>
      <div className="flex items-center w-[499px] h-full bg-[#353335]">
        <svg viewBox="0 0 34 34" className="w-[34px] h-[34px] ml-3" fill="none" stroke="#f2f2f2" strokeWidth="4">
          <circle cx="17" cy="17" r="14" />
        </svg>
        <input
          aria-label="Buscar en Windows"
          placeholder="Escribe aquí para buscar"
          className="flex-1 ml-3 text-[19px] placeholder:text-[#9b999b]"
        />
        <button aria-label="Micrófono" className="mr-5">
          <svg viewBox="0 0 18 24" className="w-[18px] h-6" fill="none" stroke="#a9a7a9" strokeWidth="2">
            <path d="M5 1h8v15H5zM1 11v6l3 3h10l3-3v-6M9 20v3M6 23h6" />
          </svg>
        </button>
      </div>
      <TaskApp label="Vista de tareas" width="w-[72px]">
        <svg viewBox="0 0 30 24" className="w-[30px] h-6" fill="none" stroke="#b9b2a9" strokeWidth="2">
          <path d="M7 1h16l1 2v18l-1 2H7l-1-2V3zM6 5H3L1 8v8l2 3h3M24 5h3l2 3v8l-2 3h-3" />
        </svg>
      </TaskApp>
      <TaskApp label="Spotify" width="w-[76px]">
        <svg viewBox="0 0 34 34" className="w-[34px] h-[34px]" fill="none" stroke="#12421f" strokeLinecap="round">
          <circle cx="17" cy="17" r="16.500" fill="#27cc5b" stroke="none" />
          <path d="M7 11c7-2 14-1 20 2" strokeWidth="3.500" />
          <path d="M8 17c6-2 12-1 17 2" strokeWidth="3" />
          <path d="M9 23c5-1 10-1 14 1" strokeWidth="2.500" />
        </svg>
      </TaskApp>
      <span className="w-1" />
      <TaskApp label="Explorador de archivos" width="w-[60px]" open>
        <svg viewBox="0 0 34 28" className="w-[34px] h-7">
          <path d="M1 1h10l3 3h19v23H1z" fill="#f5d77c" />
          <path d="M1 7h32v20H1z" fill="#fbe698" />
          <path d="M7 27V16h20v11h-6v-6h-8v6z" fill="#4fa3c9" />
        </svg>
      </TaskApp>
      <span className="w-3" />
      <TaskApp label="Chrome" width="w-[60px]" open>
        <svg viewBox="0 0 34 34" className="w-[34px] h-[34px]">
          <circle cx="17" cy="17" r="16.500" fill="#e04a3b" />
          <path d="M2.500 9.500A16.500 16.500 0 0 0 16 33.500l7-13-6-3.500-7.500 3.500z" fill="#2fa152" />
          <path d="M16 33.500A16.500 16.500 0 0 0 32 10H17l6.500 11z" fill="#f7c948" />
          <circle cx="17" cy="17" r="8" fill="#fff" />
          <circle cx="17" cy="17" r="6" fill="#4585ea" />
        </svg>
      </TaskApp>
      <span className="w-2" />
      <TaskApp label="Access" width="w-[71px]" active>
        <AccessTaskIcon />
      </TaskApp>
      <div className="ml-auto flex items-center">
        <svg viewBox="0 0 38 38" className="w-[38px] h-[38px]">
          <circle cx="19" cy="19" r="17" fill="#17539c" stroke="#6d9dc9" strokeWidth="2.500" />
          <path d="M12 15c0-9 14-9 14-1 0 5-7 5-7 11" fill="none" stroke="#fff" strokeWidth="4.500" />
          <circle cx="19" cy="30" r="3" fill="#fff" />
        </svg>
        <button aria-label="Iconos ocultos" className="ml-4">
          <svg viewBox="0 0 20 12" className="w-5 h-3" fill="none" stroke="#d5cec6" strokeWidth="2">
            <path d="m1 11 9-9 9 9" />
          </svg>
        </button>
        <svg viewBox="0 0 22 22" className="w-[22px] h-[22px] ml-3">
          <path d="m2 2 14 14" stroke="#e8e2d6" strokeWidth="5" />
          <path d="m2 9 7-7" stroke="#b8b0a2" strokeWidth="2" />
          <path d="m12 10 4 6" stroke="#d7c173" strokeWidth="5" />
          <path d="m16 16 5 5" stroke="#9a917f" strokeWidth="2" />
        </svg>
        <div className="ml-5 w-[30px] text-center text-[16px] leading-[26px]">ESP<br />ES</div>
        <div className="ml-4 w-[96px] text-center text-[17px] leading-[26px] whitespace-nowrap">05:52 p. m.<br />25/04/2018</div>
        <button aria-label="Notificaciones" className="ml-6 mr-4">
          <svg viewBox="0 0 38 38" className="w-[38px] h-[38px]">
            <path d="M1 4h25v19H12l-5 5v-5H1z" fill="#f4f1ec" />
            <path d="M5 9h17M5 13h17M5 17h12" stroke="#4a4036" strokeWidth="2" />
            <circle cx="25" cy="26" r="11" fill="#37322c" stroke="#6d675f" strokeWidth="1.500" />
            <text x="25" y="32" textAnchor="middle" fontFamily="Open Sans, sans-serif" fontSize="16" fill="#fff">1</text>
          </svg>
        </button>
        <span className="w-px h-[58px] bg-[#5c5248] mr-[5px]" />
      </div>
    </div>
  );
}

export default function App() {
  const [current, setCurrent] = useState('CLIENTE');

  return (
    <div className="bg-white px-[93px] py-[151px] font-['Open_Sans','Noto_Sans',sans-serif]">
      <div className="relative bg-[#fdfcfd]">
        <Backdrop />
        <TitleBar />
        <RibbonTabs />
        <Ribbon />
        <div className="flex min-h-[757px] bg-white">
          <NavPane current={current} onSelect={setCurrent} />
          <Document current={current} onSelect={setCurrent} />
        </div>
        <StatusBar />
        <Taskbar />
      </div>
    </div>
  );
}
